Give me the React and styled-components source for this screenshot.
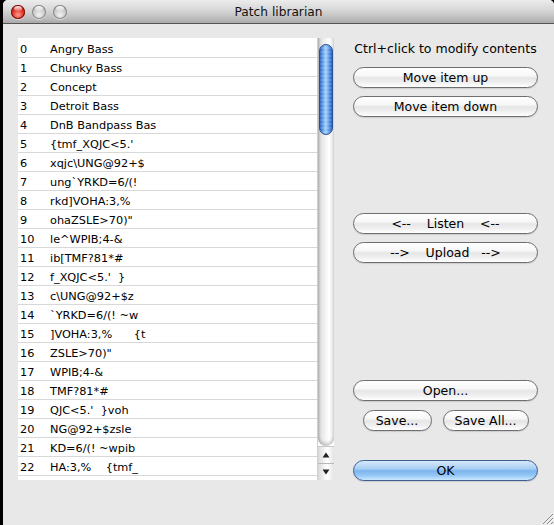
import React from 'react';
import styled, { createGlobalStyle } from 'styled-components';

const Global = createGlobalStyle`
  html, body { margin: 0; padding: 0; background: #000; }
  body {
    width: 554px; height: 525px; overflow: hidden;
    font-family: "Lucida Grande", "DejaVu Sans", "Noto Sans", sans-serif;
    -webkit-font-smoothing: antialiased;
  }
  * { box-sizing: border-box; }
`;

const Window = styled.div`
  position: relative;
  margin-left: 3px;
  width: 551px;
  height: 525px;
  background: #e8e8e8;
  border-radius: 5px 5px 0 0;
  overflow: hidden;
  display: flex;
  flex-direction: column;
`;

const TitleBar = styled.div`
  flex: none;
  height: 24px;
  display: grid;
  grid-template-columns: 1fr auto 1fr;
  align-items: center;
  background: linear-gradient(#ececec 0%, #d6d6d6 45%, #bdbdbd 80%, #a9a9a9 100%);
  border-bottom: 1px solid #555;
`;

const Lights = styled.div`
  display: flex;
  gap: 7px;
  padding-left: 8px;
`;

const Light = styled.span`
  width: 14px;
  height: 14px;
  border-radius: 50%;
  background: ${p => p.$red
    ? 'radial-gradient(circle at 50% 70%, #ff9c8c 0%, #e0382a 45%, #9c0d05 100%)'
    : 'radial-gradient(circle at 50% 70%, #f2f2f2 0%, #c4c4c4 55%, #8e8e8e 100%)'};
  box-shadow: inset 0 0 0 1px ${p => p.$red ? '#7a1008' : '#8a8a8a'}, 0 1px 0 rgba(255,255,255,0.5);
  position: relative;
  &::after {
    content: '';
    position: absolute;
    left: 3px; top: 1px;
    width: 8px; height: 5px;
    border-radius: 50%;
    background: linear-gradient(rgba(255,255,255,0.95), rgba(255,255,255,0.2));
  }
`;

const Title = styled.div`
  font-size: 12.2px;
  color: #111;
  padding-top: 1px;
`;

const Body = styled.div`
  flex: 1;
  display: flex;
  padding: 14px 0 0 15px;
`;

const ListBox = styled.div`
  flex: none;
  width: 316px;
  height: 442px;
  display: flex;
  background: #fff;
`;

const Rows = styled.div`
  width: 299px;
  padding-top: 1px;
  background: #fff;
`;

const Row = styled.div`
  height: 19px;
  display: grid;
  grid-template-columns: 30px 1fr;
  align-items: center;
  padding: 2px 0 0 2px;
  border-bottom: 1px solid #d8d8d8;
  font-size: 11.3px;
  color: #000;
  white-space: pre;
  overflow: hidden;
`;

const Scrollbar = styled.div`
  width: 17px;
  display: flex;
  flex-direction: column;
  border-left: 1px solid #d0d0d0;
`;

const Track = styled.div`
  flex: 1;
  display: flex;
  flex-direction: column;
  align-items: center;
  padding-top: 6px;
  background: linear-gradient(to right, #bdbdbd 0%, #e4e4e4 20%, #f6f6f6 50%, #ffffff 70%, #e2e2e2 100%);
  border-radius: 0 0 8px 8px;
  box-shadow: inset 0 -3px 3px rgba(0,0,0,0.18);
`;

const Thumb = styled.div`
  width: 14px;
  height: 91px;
  border-radius: 7px;
  border: 1px solid #27509a;
  background:
    repeating-linear-gradient(transparent 0 2px, rgba(255,255,255,0.12) 2px 4px),
    linear-gradient(to right, #2a5fb8 0%, #5d9be6 22%, #a7d0f7 48%, #7fb6f1 62%, #4a88dc 82%, #2a5cb0 100%);
`;

const ArrowButton = styled.div`
  height: 17px;
  flex: none;
  display: flex;
  align-items: center;
  justify-content: center;
  background: linear-gradient(to right, #d8d8d8, #f4f4f4 40%, #ffffff 60%, #e4e4e4);
  border-top: 1px solid ${p => p.$first ? '#c8c8c8' : '#b8b8b8'};
`;

const Panel = styled.div`
  flex: none;
  width: 185px;
  margin-left: 19px;
  padding-top: 1px;
  display: flex;
  flex-direction: column;
`;

const Label = styled.div`
  margin-top: 1px;
  height: 17px;
  line-height: 17px;
  font-size: 12.5px;
  color: #000;
  text-align: center;
  white-space: nowrap;
`;

const Button = styled.div`
  margin-top: ${p => p.$mt || 0}px;
  width: ${p => p.$w ? `${p.$w}px` : '100%'};
  height: 21px;
  display: flex;
  align-items: center;
  justify-content: center;
  border: 1px solid ${p => p.$primary ? '#3c5f8f' : '#6e6e6e'};
  border-radius: 11px;
  font-size: 12.5px;
  color: #000;
  white-space: pre;
  background: ${p => p.$primary
    ? 'linear-gradient(#d6e8fa 0%, #aacff4 40%, #7db5ee 52%, #93c6f6 75%, #c9e8fe 100%)'
    : 'linear-gradient(#ffffff 0%, #f7f7f7 40%, #e6e6e6 52%, #efefef 75%, #ffffff 100%)'};
  box-shadow: 0 1px 1px rgba(0,0,0,0.12);
`;

const ButtonRow = styled.div`
  margin-top: ${p => p.$mt || 0}px;
  display: flex;
  justify-content: center;
  gap: 11px;
`;

const Grip = styled.svg`
  position: absolute;
  right: 0;
  bottom: 0;
`;

const items = [
  'Angry Bass',
  'Chunky Bass',
  'Concept',
  'Detroit Bass',
  'DnB Bandpass Bas',
  "{tmf_XQJC<5.'",
  'xqjc\\UNG@92+$',
  'ung`YRKD=6/(!',
  'rkd]VOHA:3,%',
  'ohaZSLE>70)"',
  'le^WPIB;4-&',
  'ib[TMF?81*#',
  "f_XQJC<5.'  }",
  'c\\UNG@92+$z',
  '`YRKD=6/(! ~w',
  ']VOHA:3,%      {t',
  'ZSLE>70)"',
  'WPIB;4-&',
  'TMF?81*#',
  "QJC<5.'  }voh",
  'NG@92+$zsle',
  'KD=6/(! ~wpib',
  'HA:3,%    {tmf_',
];

export default function App() {
  return (
    <>
      <Global />
      <Window>
        <TitleBar>
          <Lights>
            <Light $red />
            <Light />
            <Light />
          </Lights>
          <Title>Patch librarian</Title>
          <div />
        </TitleBar>
        <Body>
          <ListBox>
            <Rows>
              {items.map((name, i) => (
                <Row key={i}>
                  <span>{i}</span>
                  <span>{name}</span>
                </Row>
              ))}
            </Rows>
            <Scrollbar>
              <Track>
                <Thumb />
              </Track>
              <ArrowButton $first>
                <svg width="8" height="6" viewBox="0 0 8 6"><path d="M4 0.5 L7.5 5.5 L0.5 5.5 Z" fill="#222" /></svg>
              </ArrowButton>
              <ArrowButton>
                <svg width="8" height="6" viewBox="0 0 8 6"><path d="M0.5 0.5 L7.5 0.5 L4 5.5 Z" fill="#222" /></svg>
              </ArrowButton>
            </Scrollbar>
          </ListBox>
          <Panel>
            <Label>Ctrl+click to modify contents</Label>
            <Button $mt={10}>Move item up</Button>
            <Button $mt={8}>Move item down</Button>
            <Button $mt={96}>{'<--    Listen    <--'}</Button>
            <Button $mt={8}>{'-->    Upload   -->'}</Button>
            <Button $mt={117}>Open...</Button>
            <ButtonRow $mt={9}>
              <Button $w={69}>Save...</Button>
              <Button $w={86}>Save All...</Button>
            </ButtonRow>
            <Button $mt={29} $primary>OK</Button>
          </Panel>
        </Body>
        <Grip width="14" height="14" viewBox="0 0 14 14">
          <path d="M13 3 L3 13 M13 7 L7 13 M13 11 L11 13" stroke="#8a8a8a" strokeWidth="1" />
          <path d="M13.8 3.8 L3.8 13.8 M13.8 7.8 L7.8 13.8" stroke="#fff" strokeWidth="0.8" />
        </Grip>
      </Window>
    </>
  );
}
